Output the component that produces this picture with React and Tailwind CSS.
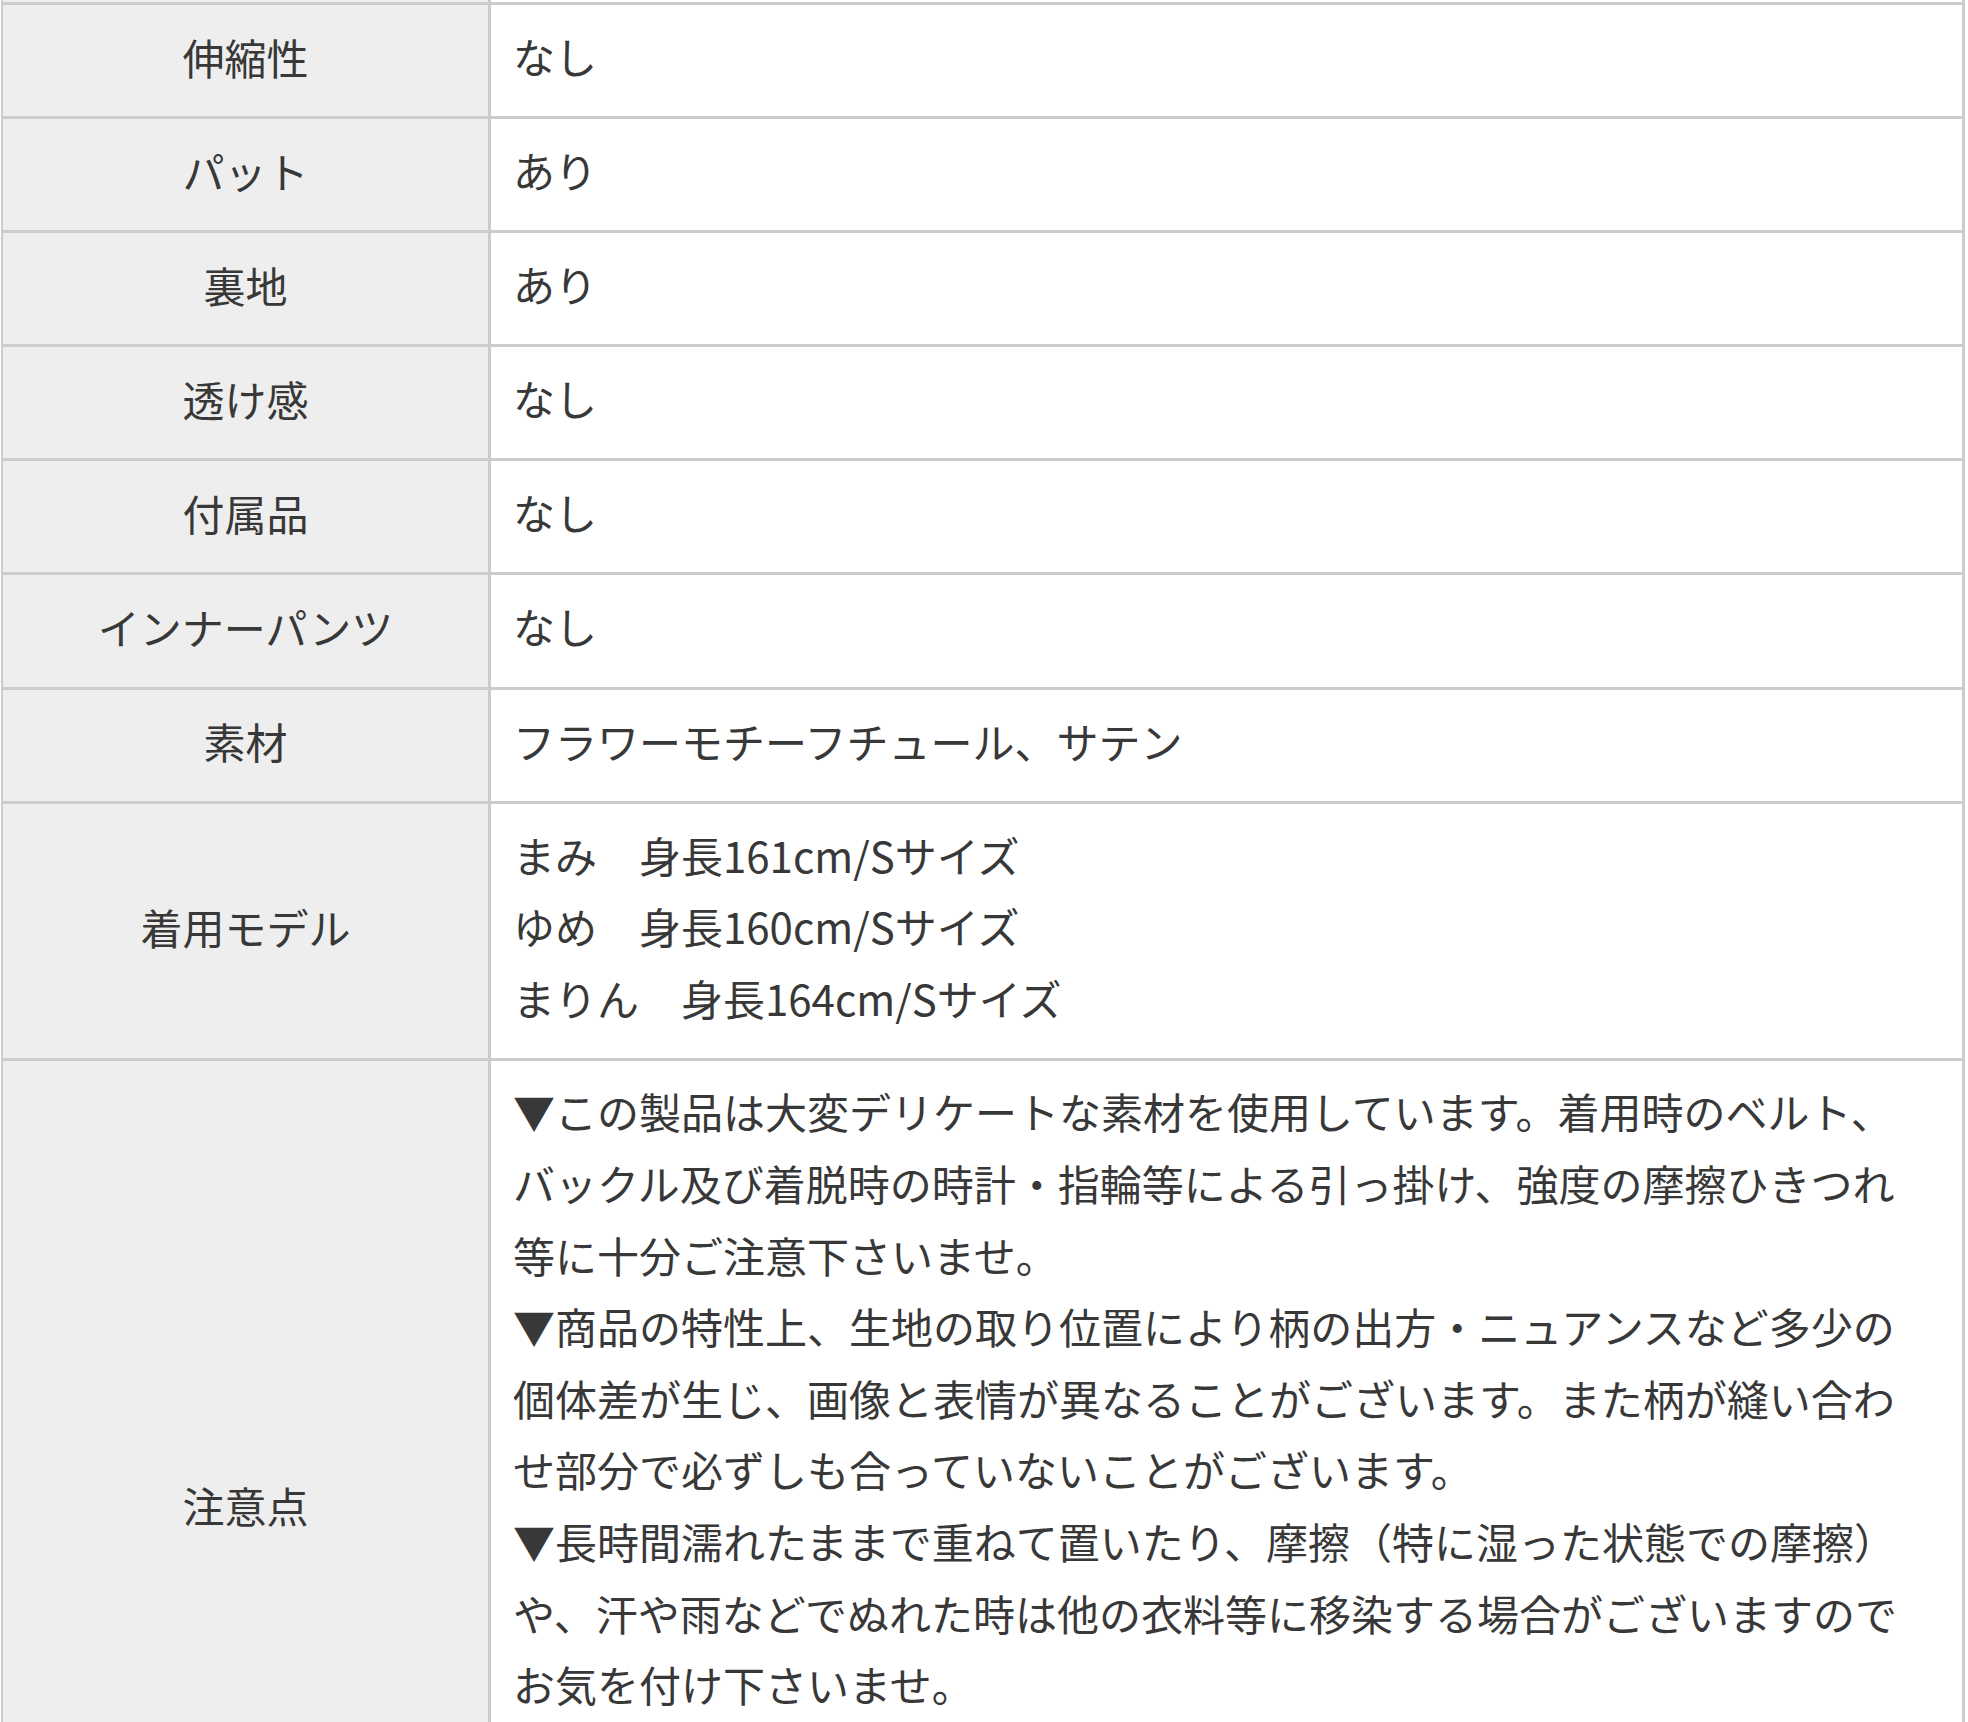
const rows = [
  { label: '伸縮性', value: ['なし'] },
  { label: 'パット', value: ['あり'] },
  { label: '裏地', value: ['あり'] },
  { label: '透け感', value: ['なし'] },
  { label: '付属品', value: ['なし'] },
  { label: 'インナーパンツ', value: ['なし'] },
  { label: '素材', value: ['フラワーモチーフチュール、サテン'] },
  {
    label: '着用モデル',
    value: ['まみ　身長161cm/Sサイズ', 'ゆめ　身長160cm/Sサイズ', 'まりん　身長164cm/Sサイズ'],
  },
];

const notes = [
  [
    '▼この製品は大変デリケートな素材を使用しています。着用時のベルト、',
    'バックル及び着脱時の時計・指輪等による引っ掛け、強度の摩擦ひきつれ',
    '等に十分ご注意下さいませ。',
  ],
  [
    '▼商品の特性上、生地の取り位置により柄の出方・ニュアンスなど多少の',
    '個体差が生じ、画像と表情が異なることがございます。また柄が縫い合わ',
    'せ部分で必ずしも合っていないことがございます。',
  ],
  [
    '▼長時間濡れたままで重ねて置いたり、摩擦（特に湿った状態での摩擦）',
    'や、汗や雨などでぬれた時は他の衣料等に移染する場合がございますので',
    'お気を付け下さいませ。',
  ],
];

function Row({ label, children, last }) {
  return (
    <div className={`flex ${last ? '' : 'border-b-[3px]'} border-[#cccccc]`}>
      <div className="w-[488px] shrink-0 flex items-center justify-center pb-[8px] bg-[#eeeeee] border-r-[3px] border-[#cccccc]">
        {label}
      </div>
      {children}
    </div>
  );
}

export default function App() {
  return (
    <div
      className="min-h-screen bg-white text-[#383838] text-[42px] leading-[71.6px]"
      style={{ fontFamily: '"Noto Sans CJK JP", "Noto Sans", sans-serif' }}
    >
      <div className="ml-[1px] w-[1964px] border-l-2 border-r-[3px] border-[#cccccc]">
        {/* tail of the row above */}
        <div className="flex h-[2px] border-b-[3px] border-[#cccccc] box-content">
          <div className="w-[488px] shrink-0 bg-[#eeeeee] border-r-[3px] border-[#cccccc]" />
          <div className="flex-1" />
        </div>

        {rows.map((r) => (
          <Row key={r.label} label={r.label}>
            <div className="flex-1 pl-[22px] pr-[18px] pt-[15px] pb-[24.5px]">
              {r.value.map((v) => (
                <div key={v} className="whitespace-nowrap">{v}</div>
              ))}
            </div>
          </Row>
        ))}

        <Row label="注意点" last>
          <div className="flex-1 pl-[22px] pr-[18px] pt-[14.5px] pb-[237px]">
            {notes.map((p, i) => (
              <p key={i}>
                {p.map((line, j) => (
                  <span key={j} className="block whitespace-nowrap">{line}</span>
                ))}
              </p>
            ))}
          </div>
        </Row>
      </div>
    </div>
  );
}
